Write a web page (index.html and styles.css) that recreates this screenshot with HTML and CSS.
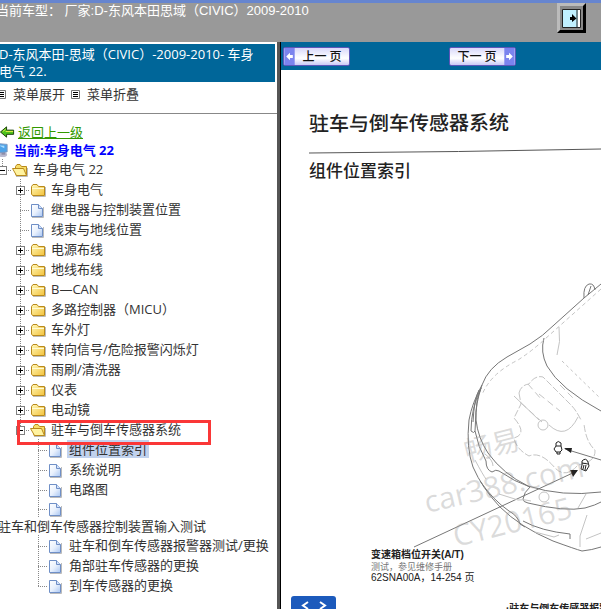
FILE: index.html
```html
<!DOCTYPE html>
<html lang="zh-CN">
<head>
<meta charset="utf-8">
<title>东风本田思域 车身电气</title>
<link rel="stylesheet" href="styles.css">
</head>
<body>
<svg class="defs" aria-hidden="true">
  <defs>
    <linearGradient id="gold" x1="0" y1="0" x2="1" y2="1"><stop offset="0" stop-color="#fff8b8"/><stop offset="1" stop-color="#f3c23c"/></linearGradient>
    <linearGradient id="sheet" x1="0" y1="0" x2="1" y2="1"><stop offset="0" stop-color="#fff"/><stop offset="0.5" stop-color="#e9f1fd"/><stop offset="1" stop-color="#a9c6f2"/></linearGradient>
    <symbol id="folder" viewBox="0 0 18 20">
      <path d="M4 17.500H16.500V8" fill="none" stroke="#bbb"/>
      <path d="M2.500 15V7.500L4 5.500H8L9.500 7.500H15.500V16.500H3.500Z" fill="url(#gold)" stroke="#b98a1c"/>
      <path d="M3 9.500H15" stroke="#fffbd5"/>
    </symbol>
    <symbol id="open" viewBox="0 0 18 20">
      <path d="M5 17.500H16.500V9" fill="none" stroke="#bbb"/>
      <path d="M4.500 9V7.500L6 5.500H9L10.500 7.500H15.500V16.500H5Z" fill="#f7dc68" stroke="#b98a1c"/>
      <path d="M1.500 9.500H12.500L15.500 16.500H5.500Z" fill="#fff3a0" stroke="#b98a1c"/>
    </symbol>
    <symbol id="doc" viewBox="0 0 18 20">
      <path d="M3 18.500H14.500V8" fill="none" stroke="#bbb"/>
      <path d="M2.500 5.500H9.500L13.500 9.500V17.500H2.500Z" fill="url(#sheet)" stroke="#6f8fc6"/>
      <path d="M9.500 5.500V9.500H13.500" fill="#d3e2fa" stroke="#6f8fc6"/>
    </symbol>
    <symbol id="list" viewBox="0 0 9 9">
      <path d="M.5.5H8.500V8.500H.5Z" fill="#fff" stroke="#777"/><path d="M2 2.500H7M2 4.500H7M2 6.500H7" stroke="#000"/>
    </symbol>
  </defs>
</svg>

<header class="top">
  <p class="model">当前车型： 厂家:D-东风本田思域（CIVIC）2009-2010</p>
  <button class="collapse" type="button" aria-label="收起">
    <svg viewBox="0 0 19 19"><path d="M.5.5H18.500V18.500H.5Z" fill="#c0f0ff" stroke="#222"/><path d="M15 1V18" stroke="#222"/><path d="M17 1V18" stroke="#fff" stroke-width="2"/><path d="M8 8H10V5L14.500 9.500L10 13V11H8Z"/></svg>
  </button>
</header>

<div class="frames">
  <nav class="side">
    <h1 class="book">D-东风本田-思域（CIVIC）-2009-2010- 车身电气 22.</h1>
    <div class="tools">
      <button type="button"><svg class="mark"><use href="#list"/></svg>菜单展开</button>
      <button type="button"><svg class="mark"><use href="#list"/></svg>菜单折叠</button>
    </div>
    <div class="menu">
      <a class="back" href="#up"><svg viewBox="0 0 16 14"><path d="M.5 7L7 1.500V5H14.500V9.500H7V12.500Z" fill="#4cc21c" stroke="#173d06"/><path d="M3 6.500L6 4M6 6.500H14" stroke="#e5f04a"/></svg><span>返回上一级</span></a>
      <p class="current"><svg viewBox="0 0 16 16"><ellipse cx="9" cy="13" rx="5" ry="2.500" fill="#b9b9cf"/><path d="M8 9H12V13H8Z" fill="#8d8da8"/><path d="M2 1L14 2V10L5 11Z" fill="#4da3e8" stroke="#7e96bd"/><path d="M5 3L11 3.500V6Z" fill="#a9dcff"/></svg>当前:车身电气 22</p>
      <ul class="tree">
        <li>
          <div class="row"><span class="branch root"><button class="knob minus" type="button" aria-label="折叠"></button></span><svg class="icon"><use href="#open"/></svg><a href="#n0">车身电气 22</a></div>
          <ul>
            <li class="row"><span class="branch"><button class="knob" type="button" aria-label="展开"></button></span><svg class="icon"><use href="#folder"/></svg><a href="#n1">车身电气</a></li>
            <li class="row"><span class="branch"></span><svg class="icon"><use href="#doc"/></svg><a href="#n2">继电器与控制装置位置</a></li>
            <li class="row"><span class="branch"></span><svg class="icon"><use href="#doc"/></svg><a href="#n3">线束与地线位置</a></li>
            <li class="row"><span class="branch"><button class="knob" type="button" aria-label="展开"></button></span><svg class="icon"><use href="#folder"/></svg><a href="#n4">电源布线</a></li>
            <li class="row"><span class="branch"><button class="knob" type="button" aria-label="展开"></button></span><svg class="icon"><use href="#folder"/></svg><a href="#n5">地线布线</a></li>
            <li class="row"><span class="branch"><button class="knob" type="button" aria-label="展开"></button></span><svg class="icon"><use href="#folder"/></svg><a href="#n6">B—CAN</a></li>
            <li class="row"><span class="branch"><button class="knob" type="button" aria-label="展开"></button></span><svg class="icon"><use href="#folder"/></svg><a href="#n7">多路控制器（MICU）</a></li>
            <li class="row"><span class="branch"><button class="knob" type="button" aria-label="展开"></button></span><svg class="icon"><use href="#folder"/></svg><a href="#n8">车外灯</a></li>
            <li class="row"><span class="branch"><button class="knob" type="button" aria-label="展开"></button></span><svg class="icon"><use href="#folder"/></svg><a href="#n9">转向信号/危险报警闪烁灯</a></li>
            <li class="row"><span class="branch"><button class="knob" type="button" aria-label="展开"></button></span><svg class="icon"><use href="#folder"/></svg><a href="#n10">雨刷/清洗器</a></li>
            <li class="row"><span class="branch"><button class="knob" type="button" aria-label="展开"></button></span><svg class="icon"><use href="#folder"/></svg><a href="#n11">仪表</a></li>
            <li class="row"><span class="branch"><button class="knob" type="button" aria-label="展开"></button></span><svg class="icon"><use href="#folder"/></svg><a href="#n12">电动镜</a></li>
            <li>
              <div class="row boxed"><span class="branch last"><button class="knob minus" type="button" aria-label="折叠"></button></span><svg class="icon"><use href="#open"/></svg><a href="#n13">驻车与倒车传感器系统</a></div>
              <ul>
                <li class="row"><span class="branch"></span><svg class="icon"><use href="#doc"/></svg><a class="selected" href="#p1">组件位置索引</a></li>
                <li class="row"><span class="branch"></span><svg class="icon"><use href="#doc"/></svg><a href="#p2">系统说明</a></li>
                <li class="row"><span class="branch"></span><svg class="icon"><use href="#doc"/></svg><a href="#p3">电路图</a></li>
                <li class="wrapped"><div class="row"><span class="branch"></span><svg class="icon"><use href="#doc"/></svg></div><a href="#p4">驻车和倒车传感器控制装置输入测试</a></li>
                <li class="row"><span class="branch"></span><svg class="icon"><use href="#doc"/></svg><a href="#p5">驻车和倒车传感器报警器测试/更换</a></li>
                <li class="row"><span class="branch"></span><svg class="icon"><use href="#doc"/></svg><a href="#p6">角部驻车传感器的更换</a></li>
                <li class="row"><span class="branch last"></span><svg class="icon"><use href="#doc"/></svg><a href="#p7">到车传感器的更换</a></li>
              </ul>
            </li>
          </ul>
        </li>
      </ul>
    </div>
  </nav>

  <main class="content">
    <div class="pager">
      <button type="button"><svg viewBox="0 0 11 18"><path d="M0 0H11V18H0Z" fill="#7b83ee"/><path d="M2 9L6 5V7.500H9V10.500H6V13Z" fill="#fff"/></svg><span>上一 页</span></button>
      <button type="button"><span>下一 页</span><svg viewBox="0 0 11 18"><path d="M0 0H11V18H0Z" fill="#7b83ee"/><path d="M9 9L5 5V7.500H2V10.500H5V13Z" fill="#fff"/></svg></button>
    </div>
    <div class="titles">
      <h2>驻车与倒车传感器系统</h2>
      <svg class="rule" viewBox="0 0 293 6" preserveAspectRatio="none"><path d="M0 5L150 3.500L293 1" stroke="#555" fill="none"/></svg>
      <h3>组件位置索引</h3>
    </div>
    <svg class="drawing" viewBox="281 190 320 419" role="img" aria-label="组件位置">
      <g class="thin">
        <path d="M601 284L584 298L554 325Q543 336 530 344L507 357Q488 368 482 385Q472 403 469 420Q466 448 473 467Q482 488 500 507Q520 527 553 541Q575 549 582 551Q592 550 601 547"/>
        <path d="M482 385Q475 405 476 420Q478 438 488 453Q503 474 528 486Q562 497 601 492"/>
        <path d="M544 338Q540 352 547 366Q560 389 601 411"/>
        <path d="M584 298Q583 286 589 284Q594 283 595 290M588 295L591 286"/>
        <path d="M481 388Q471 408 471 431Q474 434 475 431L476 412Q476 399 481 388M479 390Q474 400 473 422"/>
        <path d="M475 431Q478 447 486 461Q486 470 492 472Q496 469 499 471Q515 482 530 487Q524 492 523 499Q523 502 528 503Q565 512 585 508Q596 505 601 502"/>
        <path d="M480 481Q493 500 509 511Q518 516 520 524L525 527M523 521Q541 531 570 534V539"/>
        <path d="M414 547L577 471M601 460L565 449"/>
      </g>
      <g class="faint">
        <path d="M601 289L545 339Q532 351 518 360Q490 374 482 395" stroke-dasharray="4 3"/>
        <path d="M559 327Q561 342 557 355"/><path d="M562 361L600 398" stroke-dasharray="3 3"/>
        <path d="M519 393Q521 385 529 384Q535 375 543 377L571 405Q576 410 581 420M519 393L521 404L514 418Q528 434 514 438Q516 449 529 456Q541 451 555 468Q566 479 578 465Q596 462 595 450Q586 442 584 424" stroke-dasharray="7 2"/>
        <path d="M528 384L541 399M521 403L542 422M539 394L560 411M560 385L574 399" stroke-dasharray="7 4"/>
        <path d="M514 396L539 420M549 425Q566 441 578 417"/>
        <circle cx="543" cy="425" r="5"/><path d="M485 454Q493 460 493 466M475 460Q483 475 486 479M499 494L518 500Q524 499 531 501M535 532L554 537L559 535M587 515L580 536V547M586 539L601 533M578 508L586 494"/>
        <circle cx="544" cy="497" r="5"/>
      </g>
      <g class="sensor"><path d="M556 443Q558 440 561 443V446L562 450L560 452H556L554 449L556 446ZM557 452V454H560V452M556 446H561"/><path d="M582 461Q586 457 588 462L589 466L586 471L581 469L582 465ZM582 463L588 464M584 465L583 469M586 465L585 470"/></g>
      <path class="head" d="M578 470L570 470L573 477ZM564 448L572 448L571 453Z"/>
      <g class="stamp">
        <text class="stamp-cjk" x="467" y="462" transform="rotate(-14 467 462)">畅易</text>
        <text x="427" y="513" transform="rotate(-13 427 513)">car388.com</text>
        <text x="456" y="547" transform="rotate(-14 456 547)">CY20165</text>
      </g>
      <text class="note bold" x="371" y="558">变速箱档位开关(A/T)</text>
      <text class="note serif" x="371" y="570">测试，参见维修手册</text>
      <text class="note" x="371" y="581">62SNA00A，14-254 页</text>
      <text class="note bold" x="506" y="612">·驻车与倒车传感器报警</text>
    </svg>
    <button class="code" type="button" aria-label="切换"><svg viewBox="0 0 26 10"><path d="M7 3L2 6.500L7 10M19 3L24 6.500L19 10" fill="none" stroke="#fff" stroke-width="2"/></svg></button>
  </main>
</div>
</body>
</html>
```

FILE: styles.css
```css
*, ::before, ::after { box-sizing: border-box; }

body {
  margin: 0;
  height: 100vh;
  display: flex;
  flex-direction: column;
  overflow: hidden;
  background: #fff;
  color: #333;
  font: 13px/20px "Open Sans", "Noto Sans CJK SC", sans-serif;
}

button {
  margin: 0;
  padding: 0;
  border: 0;
  background: none;
  color: inherit;
  font: inherit;
}

p, h1, h2, h3, ul { margin: 0; padding: 0; font-weight: normal; }
ul { list-style: none; }
a { color: inherit; text-decoration: none; }
svg { display: block; flex: none; }
.defs { position: absolute; width: 0; height: 0; }

.top {
  display: flex;
  justify-content: space-between;
  align-items: flex-start;
  flex: none;
  height: 42px;
  padding-right: 15px;
  border-top: 3px solid #6685cf;
  background: #999;
}

.model {
  margin-left: -4px;
  line-height: 16px;
  color: #fff;
  font-family: "Liberation Sans", "Noto Sans CJK SC", sans-serif;
  white-space: nowrap;
}

.collapse {
  width: 29px;
  height: 30px;
  padding: 2px;
  border: 3px solid;
  border-color: #bbb #000 #000 #bbb;
  background: #888;
}
.collapse svg { width: 19px; height: 19px; }

.frames {
  display: grid;
  grid-template-columns: 281px 1fr;
  flex: 1;
  min-height: 0;
}

.side {
  overflow: hidden;
  padding-top: 2px;
  border-right: 1px solid #000;
  box-shadow: inset -3px 0 #555;
}

.book {
  margin: 0 5px 0 -1px;
  padding: 2px 9px 2px 0;
  background: #069;
  color: #fff;
  font-size: 13px;
  line-height: 17px;
}

.tools {
  display: flex;
  gap: 6px;
  height: 32px;
  margin: 0 3px 0 -3px;
  padding-top: 2px;
  border-bottom: 1px solid #888;
}
.tools button { display: flex; align-items: center; gap: 7px; height: 20px; }
.mark { width: 9px; height: 9px; }

.menu { padding-top: 8px; white-space: nowrap; }
.back, .current { display: flex; align-items: center; height: 18px; }
.back { gap: 3px; height: 19px; color: #390; }
.back span { text-decoration: underline; }
.back svg { width: 15px; height: 14px; }
.current { gap: 5px; margin-left: -6px; color: #00f; font-weight: bold; }
.current svg { width: 15px; height: 16px; }

.tree { margin-left: -7px; }
.tree ul { padding-left: 18px; }
.row { display: flex; align-items: center; height: 20px; }
.row > a { margin-left: 4px; }
.icon { width: 18px; height: 20px; }

.branch {
  display: flex;
  align-items: center;
  justify-content: center;
  width: 18px;
  height: 20px;
  padding-top: 3px;
  background:
    repeating-linear-gradient(#888 0 1px, transparent 1px 2px) 9px 0 / 1px 100% no-repeat,
    repeating-linear-gradient(90deg, #888 0 1px, transparent 1px 2px) 9px 11px / 9px 1px no-repeat;
}
.branch.last, .branch.root { background-size: 1px 11px, 9px 1px; }

.knob {
  width: 9px;
  height: 9px;
  border: 1px solid #808080;
  background:
    linear-gradient(#000, #000) center / 5px 1px no-repeat,
    linear-gradient(#000, #000) center / 1px 5px no-repeat,
    #fff;
}
.knob.minus { background: linear-gradient(#000, #000) center / 5px 1px no-repeat, #fff; }

.row > a.selected {
  margin-left: 2px;
  padding: 0 2px;
  background: #c1d2ee;
  line-height: 18px;
}

.boxed { position: relative; }
.boxed::after {
  content: "";
  position: absolute;
  left: 6px;
  top: 1px;
  width: 194px;
  height: 25px;
  border: 3px solid #fa3737;
  pointer-events: none;
}

.wrapped { height: 36px; line-height: 18px; }
.wrapped .row { height: 18px; }
.wrapped > a { display: block; margin-left: -31px; }

.content { position: relative; overflow: hidden; }

.pager {
  display: flex;
  gap: 99px;
  height: 28px;
  padding: 5px 2px;
  background: #069;
}
.pager button {
  display: flex;
  align-items: center;
  justify-content: space-between;
  width: 67px;
  height: 19px;
  border: 1px solid #5c56b8;
  border-radius: 2px;
  background: linear-gradient(#d8d8fa, #fff 60%, #c9c9f6);
  color: #111;
  font-size: 12px;
  font-weight: 500;
}
.pager svg { width: 11px; height: 17px; }
.pager span { flex: 1; text-align: center; }

.titles { height: 120px; padding: 38px 0 0 28px; color: #222; }
.titles h2 {
  font-size: 20px;
  font-weight: 500;
  line-height: 30px;
  transform: rotate(-0.4deg);
}
.titles h3 { margin-top: 5px; font-size: 17px; font-weight: 500; line-height: 24px; }
.rule { width: 100%; height: 6px; margin-top: 10px; }

.drawing { width: 100%; height: auto; }
.thin { fill: none; stroke: #777; stroke-width: 1; }
.faint { fill: none; stroke: #c4c4c4; stroke-width: 1; }
.sensor { fill: none; stroke: #222; stroke-width: 1; }
.head { fill: #222; }
.stamp { fill: #999; fill-opacity: 0.35; font-family: "Open Sans", "Noto Sans CJK SC", sans-serif; font-size: 30px; }
.stamp-cjk { font-size: 28px; }
.note { fill: #222; font-family: "Liberation Sans", "Noto Sans CJK SC", sans-serif; font-size: 10px; }
.bold { font-weight: bold; }
.serif { fill: #777; font-family: "Liberation Serif", "Noto Sans CJK SC", serif; font-size: 9px; }

.code {
  position: absolute;
  left: 10px;
  bottom: 0;
  width: 45px;
  height: 13px;
  border-radius: 3px 3px 0 0;
  background: #1c5abc;
}
.code svg { width: 26px; height: 10px; margin: 3px auto 0; }
```
